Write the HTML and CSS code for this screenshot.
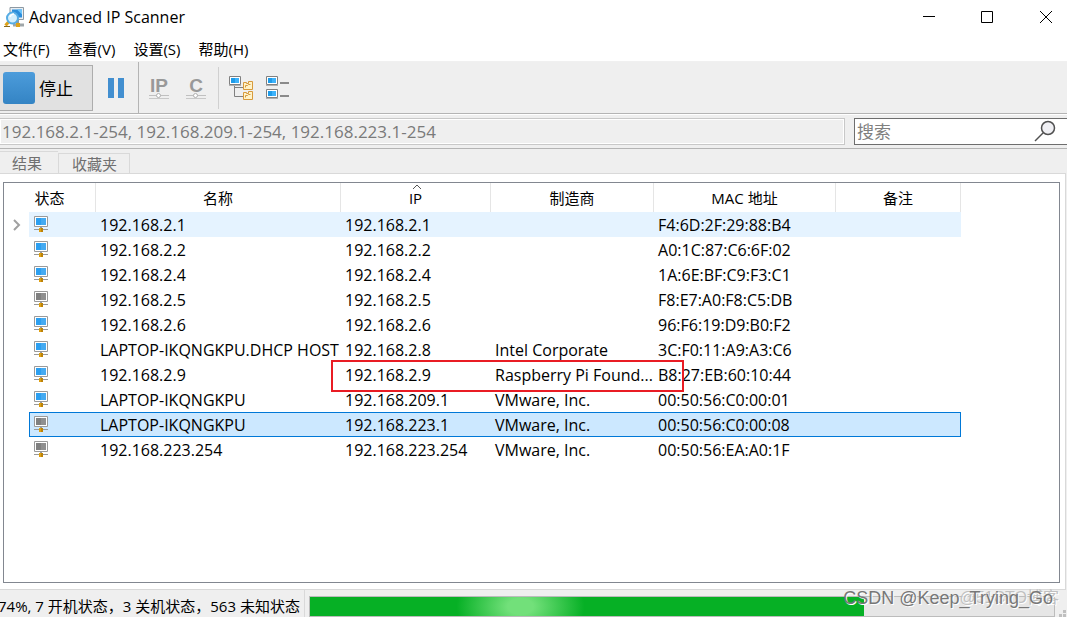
FILE: index.html
```html
<!DOCTYPE html>
<html lang="zh-CN">
<head>
<meta charset="utf-8">
<title>Advanced IP Scanner</title>
<link rel="stylesheet" href="styles.css">
</head>
<body>
<svg class="defs" aria-hidden="true">
  <defs>
    <symbol id="host" viewBox="0 0 14 16">
      <path d="M.5.5h13v10H.5z" fill="#fff" stroke="#9a9a9a"/>
      <path d="M2 2h10v7H2z" fill="currentColor"/>
      <path d="M7 2h5v7H7z" fill="#fff" fill-opacity=".12"/>
      <path d="M6 11h2v1H6z" fill="#9a9a9a"/>
      <path d="M0 13.500h14" stroke="#9a9a9a"/>
      <path d="M5 12h4v4H5z" fill="#dfa010"/>
      <path d="M7 12h2v4H7z" fill="#bd8208"/>
    </symbol>
    <symbol id="monitor" viewBox="0 0 12 10">
      <path d="M.5.5h11v8H.5z" fill="#fff" stroke="#808080"/>
      <path d="M0 9.500h12" stroke="#b0b0b0"/>
      <path d="M2 2h8v5H2z" fill="#1e9be8"/>
      <path d="M6 2h4v5H6z" fill="#3db2fa"/>
    </symbol>
    <symbol id="folder" viewBox="0 0 10 9">
      <path d="M.5 8.500v-7h3v1h2v-2h4v8z" fill="#fff3c9" stroke="#d79a3c"/>
      <path d="M2.500 6.500v-2h2l1-1h2" fill="none" stroke="#d79a3c"/>
    </symbol>
  </defs>
</svg>
<div class="window">
  <header class="titlebar">
    <svg class="app-icon" width="21" height="21" viewBox="0 0 21 21">
      <path d="M6 .5h13.500v12H6z" fill="#e9eef2" stroke="#8d99a3"/>
      <path d="M8 2.500h10v8H8z" fill="#2b8ddb"/>
      <path d="M13 2.500h5v5z" fill="#69c3fa"/>
      <path d="M11 13h4v3h-4z" fill="#8d99a3"/>
      <path d="M9 18h11" stroke="#9fa6a9" stroke-width="3"/>
      <path d="M12 16h4v4h-4z" fill="#dda21a"/>
      <path d="M4.500 15L1.500 18.500" stroke="#dda21a" stroke-width="3"/>
      <path d="M0 19.500h6" stroke="#8a6a20"/>
      <circle cx="8.500" cy="11" r="5.500" fill="#d4effd" stroke="#56ace4" stroke-width="2"/>
      <path d="M6 10q1-3 4-3" fill="none" stroke="#fff" stroke-width="1.500"/>
    </svg>
    <h1 class="title">Advanced IP Scanner</h1>
    <div class="window-controls">
      <button class="wc" aria-label="最小化"><svg width="14" height="14"><path d="M1 6.500h12" stroke="#000"/></svg></button>
      <button class="wc" aria-label="最大化"><svg width="14" height="14"><path d="M1.500 1.500h11v11h-11z" fill="none" stroke="#000"/></svg></button>
      <button class="wc" aria-label="关闭"><svg width="14" height="14"><path d="M1 1l12 12M13 1L1 13" stroke="#000"/></svg></button>
    </div>
  </header>
  <nav class="menubar">
    <button>文件(F)</button><button>查看(V)</button><button>设置(S)</button><button>帮助(H)</button>
  </nav>
  <div class="toolbar">
    <button class="stop"><span class="stop-icon"></span>停止</button>
    <button class="tool pause" aria-label="暂停"><svg width="16" height="20"><path d="M0 0h6v20H0zM10 0h6v20h-6z" fill="#428fd0"/></svg></button>
    <div class="group">
      <button class="tool" aria-label="IP">
        <svg width="20" height="24" viewBox="0 0 20 24"><text class="glyph" x="10" y="16" text-anchor="middle">IP</text><path d="M0 19.500h20" stroke="#c0c0c0"/><path d="M0 22.500h20" stroke="#c8c8c8"/><circle cx="9.500" cy="19.500" r="2" fill="#fff" stroke="#b0b0b0"/></svg>
      </button>
      <button class="tool" aria-label="C">
        <svg width="20" height="24" viewBox="0 0 20 24"><text class="glyph" x="10" y="16" text-anchor="middle">C</text><path d="M0 19.500h20" stroke="#c0c0c0"/><path d="M0 22.500h20" stroke="#c8c8c8"/><circle cx="9.500" cy="19.500" r="2" fill="#fff" stroke="#b0b0b0"/></svg>
      </button>
    </div>
    <div class="group views">
      <button class="tool" aria-label="树形视图">
        <svg width="24" height="24" viewBox="0 0 24 24"><path d="M5.500 9v11.500H14M5.500 11.500H14" fill="none" stroke="#808080"/><use href="#monitor" width="12" height="10"/><use href="#folder" x="14" y="5" width="10" height="9"/><use href="#folder" x="14" y="15" width="10" height="9"/></svg>
      </button>
      <button class="tool" aria-label="列表视图">
        <svg width="24" height="24" viewBox="0 0 24 24"><use href="#monitor" width="12" height="10"/><use href="#monitor" y="13" width="12" height="10"/><path d="M14 7h9M14 20h9" stroke="#8a8a8a" stroke-width="2"/></svg>
      </button>
    </div>
  </div>
  <div class="inputs">
    <input class="range" aria-label="IP 范围" value="192.168.2.1-254, 192.168.209.1-254, 192.168.223.1-254" readonly>
    <label class="search"><input type="text" aria-label="搜索" placeholder="搜索">
      <svg width="22" height="22" viewBox="0 0 22 22"><circle cx="14" cy="8" r="6.500" fill="#f0f0f4" stroke="#505050" stroke-width="1.500"/><path d="M9 13l-8 8" stroke="#505050" stroke-width="1.500"/></svg>
    </label>
  </div>
  <div class="tabs">
    <button class="tab active">结果</button><button class="tab">收藏夹</button>
  </div>
  <main class="pane">
    <div class="list">
      <table>
        <colgroup><col class="c-exp"><col class="c-state"><col class="c-name"><col class="c-ip"><col class="c-maker"><col class="c-mac"><col class="c-note"></colgroup>
        <thead><tr><th colspan="2">状态</th><th>名称</th><th class="sorted">IP<svg class="sort" width="10" height="6"><path d="M1 5l4-4 4 4" fill="none" stroke="#555"/></svg></th><th>制造商</th><th>MAC 地址</th><th>备注</th></tr></thead>
        <tbody>
          <tr class="hover"><td><svg class="chevron" width="8" height="12"><path d="M1 1l5 5-5 5" fill="none" stroke="#a0a0a0" stroke-width="2"/></svg></td><td class="state"><svg class="host"><use href="#host"/></svg></td><td>192.168.2.1</td><td>192.168.2.1</td><td></td><td>F4:6D:2F:29:88:B4</td><td></td></tr>
          <tr><td></td><td class="state"><svg class="host"><use href="#host"/></svg></td><td>192.168.2.2</td><td>192.168.2.2</td><td></td><td>A0:1C:87:C6:6F:02</td><td></td></tr>
          <tr><td></td><td class="state"><svg class="host"><use href="#host"/></svg></td><td>192.168.2.4</td><td>192.168.2.4</td><td></td><td>1A:6E:BF:C9:F3:C1</td><td></td></tr>
          <tr><td></td><td class="state"><svg class="host off"><use href="#host"/></svg></td><td>192.168.2.5</td><td>192.168.2.5</td><td></td><td>F8:E7:A0:F8:C5:DB</td><td></td></tr>
          <tr><td></td><td class="state"><svg class="host"><use href="#host"/></svg></td><td>192.168.2.6</td><td>192.168.2.6</td><td></td><td>96:F6:19:D9:B0:F2</td><td></td></tr>
          <tr><td></td><td class="state"><svg class="host"><use href="#host"/></svg></td><td>LAPTOP-IKQNGKPU.DHCP HOST</td><td>192.168.2.8</td><td>Intel Corporate</td><td>3C:F0:11:A9:A3:C6</td><td></td></tr>
          <tr><td></td><td class="state"><svg class="host"><use href="#host"/></svg></td><td>192.168.2.9</td><td class="marked">192.168.2.9<span class="marker"></span></td><td>Raspberry Pi Found...</td><td>B8:27:EB:60:10:44</td><td></td></tr>
          <tr><td></td><td class="state"><svg class="host"><use href="#host"/></svg></td><td>LAPTOP-IKQNGKPU</td><td>192.168.209.1</td><td>VMware, Inc.</td><td>00:50:56:C0:00:01</td><td></td></tr>
          <tr class="selected"><td></td><td class="state"><svg class="host off"><use href="#host"/></svg></td><td>LAPTOP-IKQNGKPU</td><td>192.168.223.1</td><td>VMware, Inc.</td><td>00:50:56:C0:00:08</td><td></td></tr>
          <tr><td></td><td class="state"><svg class="host off"><use href="#host"/></svg></td><td>192.168.223.254</td><td>192.168.223.254</td><td>VMware, Inc.</td><td>00:50:56:EA:A0:1F</td><td></td></tr>
        </tbody>
      </table>
    </div>
  </main>
  <footer class="statusbar">
    <span class="status">74%, 7 开机状态，3 关机状态，563 未知状态</span>
    <div class="progress" role="progressbar" aria-valuenow="74"><div class="bar" style="width:74.5%"></div></div>
    <svg class="grip" width="8" height="8"><path d="M0 5h3v3H0zM4 5h3v3H4zM4 1h3v3H4z" fill="#bfbfbf"/></svg>
  </footer>
  <span class="watermark faint">@51CTO博客</span>
  <span class="watermark">CSDN @Keep_Trying_Go</span>
</div>
</body>
</html>
```
FILE: styles.css
```css
* { box-sizing: border-box; }

body {
  margin: 0;
  font-family: "Open Sans", "Noto Sans CJK SC", sans-serif;
  font-size: 15px;
  color: #000;
}

button, input { font: inherit; color: inherit; }
button { padding: 0; border: 0; background: none; }
svg { display: block; flex: none; }
.defs { position: absolute; width: 0; height: 0; }

.window {
  position: relative;
  display: flex;
  flex-direction: column;
  height: 100vh;
  overflow: hidden;
  background: #efefef;
}

.titlebar { display: flex; align-items: center; height: 36px; padding: 0 0 2px 4px; background: #fff; }
.title { margin: 0 0 0 4px; font-size: 16px; font-weight: 400; line-height: 20px; }
.window-controls { display: flex; margin: 0 -9px 0 auto; }
.wc { display: grid; place-items: center; width: 58px; height: 34px; }
.wc:last-child { width: 60px; }

.menubar { display: flex; gap: 18px; height: 26px; padding-left: 3px; background: #fff; border-bottom: 1px solid #f0f0f0; }
.menubar button { white-space: nowrap; }

.toolbar { display: flex; align-items: center; height: 52px; border-bottom: 1px solid #b4b4b4; }
.stop {
  display: flex;
  align-items: center;
  gap: 4px;
  width: 93px;
  height: 46px;
  padding-left: 3px;
  border: 1px solid #adadad;
  border-left: 0;
  background: #e1e1e1;
  font-size: 17px;
}
.stop-icon { width: 32px; height: 32px; border-radius: 3px; background: linear-gradient(#4c9cdb, #3484c4); }
.tool { display: grid; place-items: center; width: 37px; height: 42px; }
.pause { width: 45px; }
.group { display: flex; align-items: center; height: 100%; padding-left: 1px; border-left: 1px solid #b4b4b4; }
.views { height: 42px; margin-left: 4px; padding-left: 3px; border-color: #d0d0d0; }
.glyph { font: 700 19px "Liberation Sans", sans-serif; fill: #999; }

.inputs { display: flex; gap: 9px; height: 35px; padding: 3px 0; border-top: 1px solid #fff; border-bottom: 1px solid #b4b4b4; }
.range { flex: 1; min-width: 0; padding: 0 0 0 2px; border: 1px solid #c8c8c8; border-left: 0; background: #efefef; box-shadow: inset 0 0 0 1px #fff; color: #7a7a7a; font-size: 17px; }
.search { display: flex; align-items: center; width: 213px; padding: 0 11px 0 0; border: 1px solid #6e6e6e; border-right: 0; background: #fff; }
.search input { flex: 1; min-width: 0; padding: 0 2px; border: 0; background: none; font-size: 17px; }
.search input::placeholder { color: #808080; }
.search svg { margin-bottom: 2px; }

.tabs { display: flex; align-items: flex-end; height: 24px; color: #707070; }
.tab { height: 20px; padding: 0 12px 0 13px; border: 1px solid #d9d9d9; border-bottom: 0; line-height: 18px; }
.tab.active { height: 22px; padding: 0 16px 0 12px; border-left: 0; border-right: 0; line-height: 18px; }

.pane { flex: 1; min-height: 0; margin-right: 1px; padding: 8px 5px 6px 3px; border: 1px solid #d9d9d9; border-left: 0; background: #fff; }
.list { height: 100%; border: 1px solid #828790; }

table { width: 957px; border-collapse: separate; border-spacing: 0; table-layout: fixed; }
.c-exp { width: 25px; }
.c-state { width: 67px; }
.c-name { width: 245px; }
.c-ip { width: 150px; }
.c-maker { width: 163px; }
.c-mac { width: 182px; }
.c-note { width: 125px; }
th { height: 29px; padding: 0; border-right: 1px solid #e5e5e5; font-weight: 400; line-height: 20px; }
.sorted { position: relative; }
.sort { position: absolute; top: 1px; left: calc(50% - 4px); }
td { height: 25px; padding: 0 0 0 4px; font-size: 16px; line-height: 20px; white-space: nowrap; }
td.state { padding-bottom: 2px; }
.chevron { margin-left: 5px; }
.host { width: 14px; height: 16px; margin-left: 1px; color: #2c9ff0; }
.host.off { color: #808080; }
.hover td:not(:first-child) { background: #e5f3ff; }
.selected td:not(:first-child) { background: #cce8ff; border: solid #0078d7; border-width: 1px 0; }
.selected td:nth-child(2) { border-left-width: 1px; padding-left: 3px; }
.selected td:last-child { border-right-width: 1px; }
.marked { position: relative; }
.marker { position: absolute; top: -2px; left: -10px; width: 353px; height: 32px; border: 2px solid #e91c24; }

.statusbar { display: flex; align-items: center; height: 27px; }
.status { height: 27px; margin-left: -2px; padding: 6px 4px 0 0; line-height: 20px; border-right: 1px solid #d9d9d9; white-space: nowrap; }
.progress { flex: 1; height: 21px; margin: 5px 3px 0 4px; border: 1px solid #bcbcbc; background: #e6e6e6; }
.bar { height: 100%; background: radial-gradient(ellipse 64px 40px at 38% 50%, #72e07a 20%, #06b025); }
.grip { align-self: flex-end; margin-left: 1px; }

.watermark { position: absolute; right: 14px; bottom: 7px; font: 18px/24px "Liberation Sans", sans-serif; color: #777; text-shadow: 1px 1px 0 #fff; white-space: nowrap; }
.watermark.faint { right: 8px; font: 16px/24px "Liberation Sans", "Noto Sans CJK SC", sans-serif; color: #c0c0c0; }
```
